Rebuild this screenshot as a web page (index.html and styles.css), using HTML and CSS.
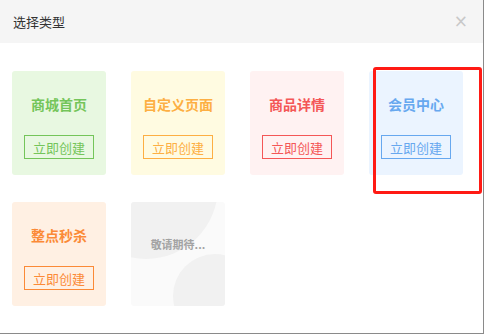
FILE: index.html
```html
<!DOCTYPE html>
<html lang="zh-CN">
<head>
    <meta charset="UTF-8">
    <meta name="viewport" content="width=device-width, initial-scale=1.0">
    <title>选择类型</title>
    <link rel="stylesheet" href="styles.css">
</head>
<body>
    <div class="dialog">
        <!-- Header -->
        <div class="dialog-header">
            <span class="dialog-title">选择类型</span>
            <span class="dialog-close">&times;</span>
        </div>

        <!-- Page types -->
        <div class="type-grid">
            <div class="type-card green">
                <div class="type-name">商城首页</div>
                <button class="create-btn">立即创建</button>
            </div>
            <div class="type-card yellow">
                <div class="type-name">自定义页面</div>
                <button class="create-btn">立即创建</button>
            </div>
            <div class="type-card red">
                <div class="type-name">商品详情</div>
                <button class="create-btn">立即创建</button>
            </div>
            <div class="type-card blue">
                <div class="type-name">会员中心</div>
                <button class="create-btn">立即创建</button>
            </div>
            <div class="type-card orange">
                <div class="type-name">整点秒杀</div>
                <button class="create-btn">立即创建</button>
            </div>
            <div class="type-card coming">
                <div class="type-name">敬请期待...</div>
            </div>
        </div>

        <!-- Highlight box -->
        <div class="highlight"></div>
    </div>
</body>
</html>
```

FILE: styles.css
```css
* {
    box-sizing: border-box;
}

body {
    margin: 0;
    font-family: "Noto Sans CJK SC", "Noto Sans", sans-serif;
    background: #fff;
}

.dialog {
    position: relative;
    width: 484px;
    height: 334px;
    border-right: 1px solid #8a8a8a;
    border-bottom: 1px solid #8a8a8a;
    background: #fff;
    overflow: hidden;
}

.dialog-header {
    height: 43px;
    display: flex;
    align-items: center;
    justify-content: space-between;
    padding: 0 15px 0 13px;
    background-color: #f5f5f5;
}

.dialog-title {
    font-size: 13px;
    color: #333;
}

.dialog-close {
    font-family: "DejaVu Sans", sans-serif;
    font-size: 17px;
    color: #c8c8c8;
    line-height: 1;
}

.type-grid {
    display: grid;
    grid-template-columns: repeat(4, 94px);
    grid-auto-rows: 104px;
    column-gap: 25px;
    row-gap: 27px;
    padding: 28px 0 0 12px;
}

.type-card {
    position: relative;
    display: flex;
    flex-direction: column;
    align-items: center;
    padding-top: 23px;
    border-radius: 3px;
    overflow: hidden;
}

.type-name {
    position: relative;
    font-size: 14px;
    font-weight: bold;
    line-height: 20px;
}

.create-btn {
    margin-top: 21px;
    width: 70px;
    height: 24px;
    padding: 0;
    border: 1px solid currentColor;
    background: transparent;
    font-family: inherit;
    font-size: 13px;
    color: inherit;
    cursor: pointer;
}

.green {
    background-color: #e8f8e1;
    color: #74c55a;
}

.yellow {
    background-color: #fffbe1;
    color: #fdaf43;
}

.red {
    background-color: #fff2f2;
    color: #f45757;
}

.blue {
    background-color: #ebf4ff;
    color: #67a8ef;
}

.orange {
    background-color: #fff0e3;
    color: #fb8a37;
}

.coming {
    background-color: #fafafa;
    color: #a3a3a3;
    padding-top: 32px;
}

.coming .type-name {
    font-size: 11px;
}

.coming::before,
.coming::after {
    content: "";
    position: absolute;
    border-radius: 50%;
    background-color: #f1f1f1;
}

.coming::before {
    width: 144px;
    height: 144px;
    left: -57px;
    top: -87px;
}

.coming::after {
    width: 84px;
    height: 84px;
    right: -32px;
    bottom: -32px;
}

.highlight {
    position: absolute;
    left: 373px;
    top: 67px;
    width: 109px;
    height: 127px;
    border: 3px solid #ff1a14;
    border-radius: 3px;
}
```
